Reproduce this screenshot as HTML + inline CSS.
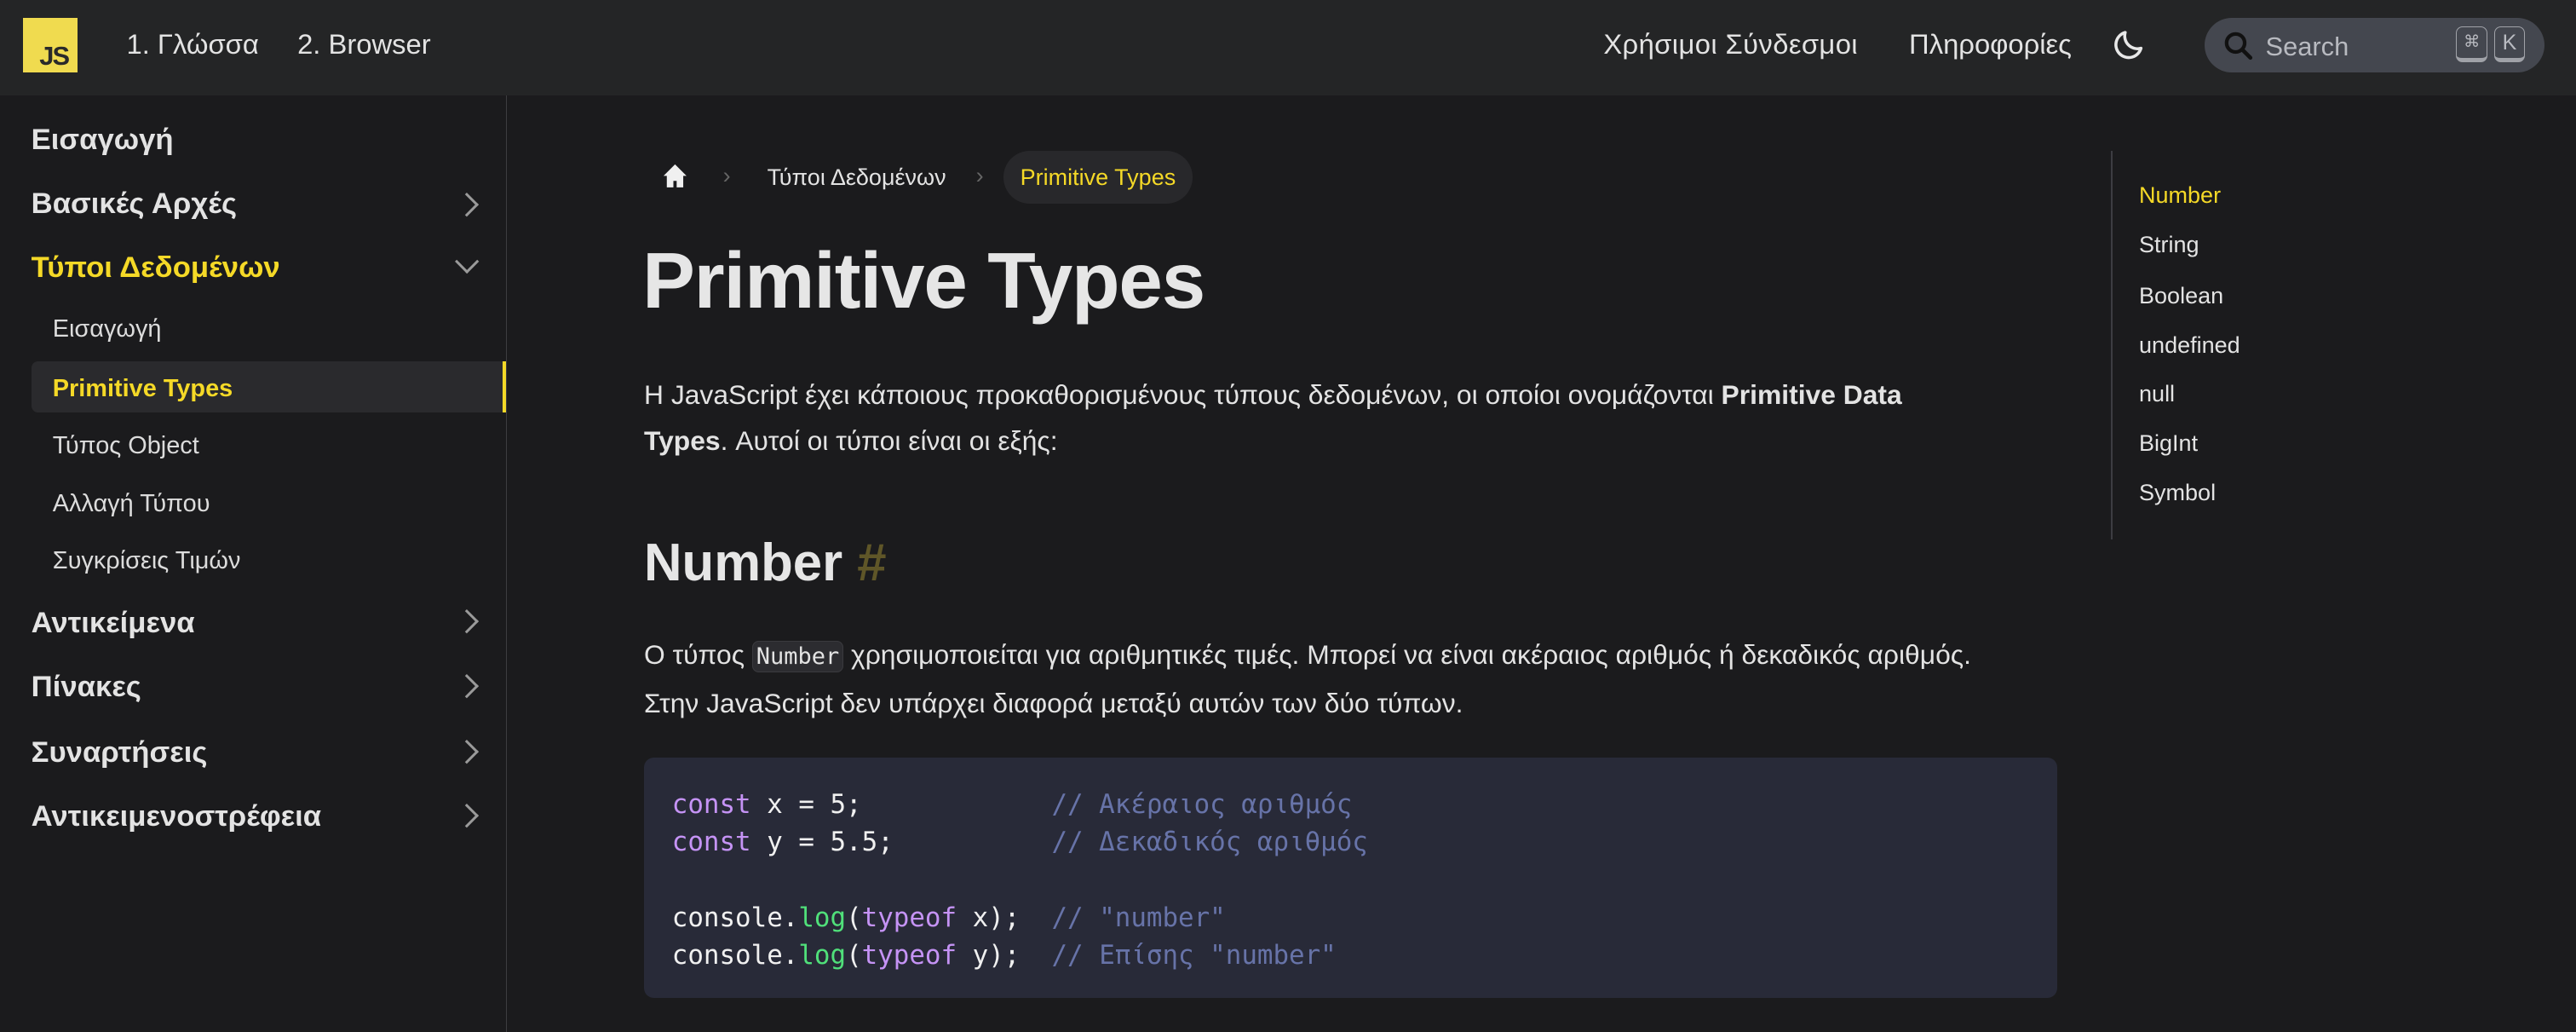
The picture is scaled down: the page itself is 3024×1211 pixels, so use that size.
<!DOCTYPE html>
<html><head><meta charset="utf-8"><style>
html,body{margin:0;padding:0;background:#1b1b1d;}
body{width:3024px;height:1210px;overflow:hidden;}
#w{zoom:1.9286;width:1568px;height:628px;position:relative;font-family:"Liberation Sans","DejaVu Sans",sans-serif;color:#e3e3e3;}
.a{position:absolute;white-space:nowrap;}
#hd{position:absolute;left:0;top:0;width:1568px;height:58px;background:#242526;}
#sb{position:absolute;left:0;top:58px;width:308px;height:570px;border-right:1px solid #3d3d40;}
.s1{font-size:18px;font-weight:bold;color:#e3e3e3;left:19px;}
.s2{font-size:15px;color:#dcdcdc;left:32px;}
.chev{position:absolute;left:279px;width:9px;height:9px;border-right:2px solid #9a9a9a;border-bottom:2px solid #9a9a9a;transform:rotate(-45deg);}
.toc{left:1302px;font-size:14px;color:#e3e3e3;}
pre{margin:0;font-family:"DejaVu Sans Mono","Liberation Mono",monospace;font-size:16px;line-height:23px;color:#f0f0f0;}
.k{color:#c593f5}.g{color:#50e07a}.c{color:#6773a8}
</style></head><body><div id="w">
<div id="hd">
 <div class="a" style="left:14px;top:11px;width:33px;height:33px;background:#f0db4f;"><span class="a" style="left:10px;top:14px;font-size:16px;font-weight:bold;color:#2a2a2a;letter-spacing:-1px;">JS</span></div>
 <div class="a" style="left:77px;top:17px;font-size:17px;">1. Γλώσσα</div>
 <div class="a" style="left:181px;top:17px;font-size:17px;">2. Browser</div>
 <div class="a" style="left:976px;top:17px;font-size:17px;letter-spacing:0.2px;">Χρήσιμοι Σύνδεσμοι</div>
 <div class="a" style="left:1162px;top:17px;font-size:17px;">Πληροφορίες</div>
 <svg class="a" style="left:1285px;top:16px" width="22" height="22" viewBox="0 0 24 24"><path d="M20 14.5A8.5 8.5 0 0 1 9.5 4a8.5 8.5 0 1 0 10.5 10.5z" fill="none" stroke="#e8e8e8" stroke-width="2" stroke-linejoin="round"/></svg>
 <div class="a" style="left:1342px;top:11px;width:207px;height:33px;border-radius:17px;background:#44474f;">
  <svg class="a" style="left:11px;top:7px" width="20" height="20" viewBox="0 0 20 20"><circle cx="8" cy="8" r="5.5" fill="none" stroke="#111" stroke-width="2.2"/><path d="M12 12l5 5" stroke="#111" stroke-width="2.4" stroke-linecap="round"/></svg>
  <span class="a" style="left:37px;top:8px;font-size:16px;color:#b8bac0;">Search</span>
  <span class="a" style="left:153px;top:5px;width:18px;height:19px;border:1px solid #a0a2a8;border-bottom-width:3px;border-radius:4px;font-size:10px;color:#b8bac0;text-align:center;line-height:19px;">⌘</span>
  <span class="a" style="left:176px;top:5px;width:18px;height:19px;border:1px solid #a0a2a8;border-bottom-width:3px;border-radius:4px;font-size:13px;color:#b8bac0;text-align:center;line-height:19px;">K</span>
 </div>
</div>
<div id="sb">
 <div class="a" style="left:19px;top:162px;width:289px;height:31px;background:#2a2a2d;border-radius:4px 0 0 4px;"></div>
 <div class="a" style="left:306px;top:162px;width:2px;height:31px;background:#f5d927;"></div>
</div>
<div class="a s1" style="top:75px;">Εισαγωγή</div>
<div class="a s1" style="top:114px;">Βασικές Αρχές</div><div class="chev" style="top:119px;"></div>
<div class="a s1" style="top:153px;color:#f5d927;">Τύποι Δεδομένων</div><div class="chev" style="top:154px;transform:rotate(45deg);"></div>
<div class="a s2" style="top:192px;">Εισαγωγή</div>
<div class="a s2" style="top:228px;color:#f5d927;font-weight:bold;">Primitive Types</div>
<div class="a s2" style="top:263px;">Τύπος Object</div>
<div class="a s2" style="top:298px;">Αλλαγή Τύπου</div>
<div class="a s2" style="top:333px;">Συγκρίσεις Τιμών</div>
<div class="a s1" style="top:369px;">Αντικείμενα</div><div class="chev" style="top:373px;"></div>
<div class="a s1" style="top:408px;">Πίνακες</div><div class="chev" style="top:412px;"></div>
<div class="a s1" style="top:448px;">Συναρτήσεις</div><div class="chev" style="top:452px;"></div>
<div class="a s1" style="top:487px;">Αντικειμενοστρέφεια</div><div class="chev" style="top:491px;"></div>

<svg class="a" style="left:403px;top:99px" width="16" height="16" viewBox="0 0 16 16"><path d="M8 1L1 8h2v7h4v-4h2v4h4V8h2z" fill="#f0f0f0"/></svg>
<div class="a" style="left:440px;top:99px;font-size:14px;color:#666;">›</div>
<div class="a" style="left:467px;top:100px;font-size:14px;">Τύποι Δεδομένων</div>
<div class="a" style="left:594px;top:99px;font-size:14px;color:#666;">›</div>
<div class="a" style="left:611px;top:92px;width:115px;height:32px;border-radius:16px;background:#28282b;"></div>
<div class="a" style="left:621px;top:100px;font-size:14px;color:#f5d927;">Primitive Types</div>

<div class="a" style="left:391px;top:143px;font-size:48px;font-weight:bold;color:#e6e6e6;letter-spacing:-0.6px;">Primitive Types</div>
<div class="a" style="left:392px;top:226px;font-size:16.5px;line-height:28px;white-space:normal;width:820px;">Η JavaScript έχει κάποιους προκαθορισμένους τύπους δεδομένων, οι οποίοι ονομάζονται <b>Primitive Data Types</b>. Αυτοί οι τύποι είναι οι εξής:</div>
<div class="a" style="left:392px;top:324px;font-size:32px;font-weight:bold;color:#e6e6e6;">Number <span style="color:#5f5628">#</span></div>
<div class="a" style="left:392px;top:384px;font-size:16.5px;line-height:28px;white-space:normal;width:820px;">Ο τύπος <span style="font-family:'DejaVu Sans Mono',monospace;font-size:14px;background:#2c2c30;border:1px solid #3a3a3e;border-radius:4px;padding:1px 2px;">Number</span> χρησιμοποιείται για αριθμητικές τιμές. Μπορεί να είναι ακέραιος αριθμός ή δεκαδικός αριθμός. Στην JavaScript δεν υπάρχει διαφορά μεταξύ αυτών των δύο τύπων.</div>
<div class="a" style="left:392px;top:461px;width:860px;height:146px;background:#282a38;border-radius:6px;">
<pre style="position:absolute;left:17px;top:17px;"><span class="k">const</span> x = 5;            <span class="c">// Ακέραιος αριθμός</span>
<span class="k">const</span> y = 5.5;          <span class="c">// Δεκαδικός αριθμός</span>

console.<span class="g">log</span>(<span class="k">typeof</span> x);  <span class="c">// "number"</span>
console.<span class="g">log</span>(<span class="k">typeof</span> y);  <span class="c">// Επίσης "number"</span></pre>
</div>

<div class="a" style="left:1285px;top:92px;width:1px;height:236px;background:#3d3d42;"></div>
<div class="a toc" style="top:111px;color:#f5d927;">Number</div>
<div class="a toc" style="top:141px;">String</div>
<div class="a toc" style="top:172px;">Boolean</div>
<div class="a toc" style="top:202px;">undefined</div>
<div class="a toc" style="top:232px;">null</div>
<div class="a toc" style="top:262px;">BigInt</div>
<div class="a toc" style="top:292px;">Symbol</div>
</div></body></html>
